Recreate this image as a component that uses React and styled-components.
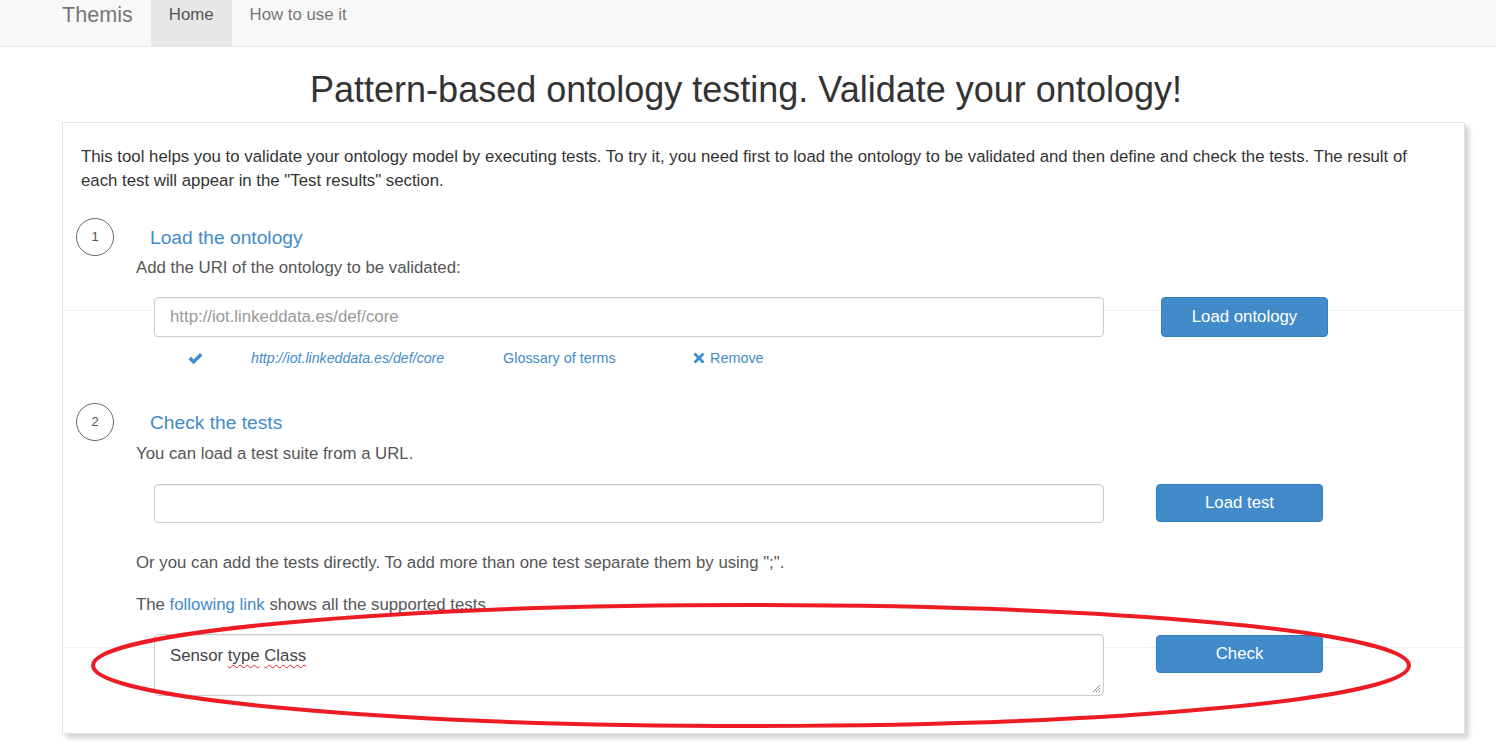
import styled, { createGlobalStyle } from "styled-components";

const GlobalStyle = createGlobalStyle`
  body {
    margin: 0;
    background: #ffffff;
    font-family: "Liberation Sans", Arial, Helvetica, sans-serif;
    font-size: 16.8px;
    line-height: 24px;
    color: #333333;
  }
  * {
    box-sizing: border-box;
  }
`;

const Page = styled.div`
  position: relative;
  width: 1496px;
  min-height: 749px;
  overflow: hidden;
`;

const Navbar = styled.nav`
  display: flex;
  height: 47px;
  padding-left: 62px;
  background: #f8f8f8;
  border-bottom: 1px solid #e7e7e7;
`;

const Brand = styled.a`
  padding: 2px 18px 0 0;
  font-size: 21.6px;
  line-height: 26px;
  color: #777777;
  text-decoration: none;
`;

const NavItem = styled.a`
  padding: 3px 18px 0;
  height: 46px;
  font-size: 16.8px;
  line-height: 24px;
  text-decoration: none;
  color: ${(p) => (p.active ? "#555555" : "#777777")};
  background: ${(p) => (p.active ? "#e7e7e7" : "transparent")};
`;

const Title = styled.h1`
  margin: 23px 0 12px;
  padding-right: 4px;
  font-size: 36px;
  line-height: 40px;
  font-weight: 400;
  text-align: center;
  color: #333333;
`;

const Card = styled.section`
  margin: 0 31px 16px 62px;
  padding: 22px 0 37px 0;
  border: 1px solid #e3e3e3;
  background: #ffffff;
  box-shadow: 4px 4px 5px rgba(0, 0, 0, 0.18);
`;

const Intro = styled.p`
  margin: 0;
  padding: 0 20px 0 18px;
  color: #333333;
`;

const Step = styled.div`
  display: flex;
  align-items: center;
  margin-top: ${(p) => p.top}px;
  padding-left: 13px;
`;

const Circle = styled.span`
  display: flex;
  align-items: center;
  justify-content: center;
  width: 38px;
  height: 38px;
  border: 1px solid #666666;
  border-radius: 50%;
  font-size: 13px;
  color: #555555;
`;

const StepTitle = styled.h4`
  margin: 1px 0 0 36px;
  font-size: 19.2px;
  line-height: 24px;
  font-weight: 400;
  color: #428bca;
`;

const Text = styled.p`
  margin: ${(p) => p.top || 0}px 0 0;
  padding-left: 73px;
  color: #555555;
`;

const Link = styled.a`
  color: #428bca;
  text-decoration: none;
`;

const FieldRow = styled.div`
  display: flex;
  align-items: flex-start;
  gap: ${(p) => p.gap}px;
  margin-top: ${(p) => p.top}px;
  padding-left: 91px;
  background: ${(p) =>
    p.rule ? "linear-gradient(#f0f0f0, #f0f0f0) no-repeat 2px 13px / calc(100% - 4px) 1px" : "none"};
`;

const Input = styled.input`
  width: 950px;
  height: ${(p) => p.h}px;
  padding: 0 15px;
  border: 1px solid #cccccc;
  border-radius: 4px;
  font-family: inherit;
  font-size: 16.8px;
  color: #555555;
  background: #ffffff;
  box-shadow: inset 0 1px 1px rgba(0, 0, 0, 0.075);
  &::placeholder {
    color: #999999;
  }
`;

const TextArea = styled.div`
  position: relative;
  width: 950px;
  height: 62px;
  padding: 9px 15px;
  border: 1px solid #cccccc;
  border-radius: 4px;
  font-size: 16.8px;
  line-height: 24px;
  color: #444444;
  background: #ffffff;
  box-shadow: inset 0 1px 1px rgba(0, 0, 0, 0.075);
`;

const Misspelled = styled.span`
  text-decoration: underline wavy #e02020;
  text-decoration-thickness: 1px;
  text-underline-offset: 3px;
`;

const Grip = styled.svg`
  position: absolute;
  right: 2px;
  bottom: 2px;
`;

const Button = styled.button`
  width: 167px;
  height: ${(p) => p.h}px;
  margin-top: ${(p) => p.top || 0}px;
  border: 1px solid #357ebd;
  border-radius: 4px;
  background: #428bca;
  color: #ffffff;
  font-family: inherit;
  font-size: 16.8px;
  cursor: pointer;
`;

const ResultRow = styled.div`
  display: grid;
  grid-template-columns: 63px 252px 190px auto;
  align-items: center;
  margin-top: 9px;
  padding-left: 125px;
  font-size: 14.4px;
  line-height: 24px;
`;

const UriLink = styled(Link)`
  font-style: italic;
  font-size: 14.2px;
`;

const IconLink = styled(Link)`
  display: flex;
  align-items: center;
  gap: 5px;
`;

const Overlay = styled.svg`
  position: absolute;
  left: 0;
  top: 0;
  pointer-events: none;
`;

const CheckIcon = () => (
  <svg width="15" height="13" viewBox="0 0 15 13">
    <path d="M0.5 7.2 L3 4.8 L5.6 7.4 L12 1 L14.5 3.4 L5.6 12.2 Z" fill="#428bca" />
  </svg>
);

const RemoveIcon = () => (
  <svg width="12" height="12" viewBox="0 0 12 12">
    <path
      d="M0.5 2.5 L2.5 0.5 L6 4 L9.5 0.5 L11.5 2.5 L8 6 L11.5 9.5 L9.5 11.5 L6 8 L2.5 11.5 L0.5 9.5 L4 6 Z"
      fill="#428bca"
    />
  </svg>
);

export default function App() {
  return (
    <Page>
      <GlobalStyle />
      <Navbar>
        <Brand href="#">Themis</Brand>
        <NavItem href="#" active>
          Home
        </NavItem>
        <NavItem href="#">How to use it</NavItem>
      </Navbar>

      <Title>Pattern-based ontology testing. Validate your ontology!</Title>

      <Card>
        <Intro>
          This tool helps you to validate your ontology model by executing tests. To try it, you
          need first to load the ontology to be validated and then define and check the tests. The
          result of each test will appear in the "Test results" section.
        </Intro>

        <Step top={25}>
          <Circle>1</Circle>
          <StepTitle>Load the ontology</StepTitle>
        </Step>
        <Text>Add the URI of the ontology to be validated:</Text>

        <FieldRow top={17} gap={57} rule>
          <Input h={40} placeholder="http://iot.linkeddata.es/def/core" />
          <Button h={40}>Load ontology</Button>
        </FieldRow>

        <ResultRow>
          <CheckIcon />
          <UriLink href="#">http://iot.linkeddata.es/def/core</UriLink>
          <Link href="#">Glossary of terms</Link>
          <IconLink href="#">
            <RemoveIcon />
            Remove
          </IconLink>
        </ResultRow>

        <Step top={33}>
          <Circle>2</Circle>
          <StepTitle>Check the tests</StepTitle>
        </Step>
        <Text top={1}>You can load a test suite from a URL.</Text>

        <FieldRow top={18} gap={52}>
          <Input h={39} />
          <Button h={38}>Load test</Button>
        </FieldRow>

        <Text top={28}>
          Or you can add the tests directly. To add more than one test separate them by using ";".
        </Text>
        <Text top={18}>
          The <Link href="#">following link</Link> shows all the supported tests.
        </Text>

        <FieldRow top={17} gap={52} rule>
          <TextArea>
            Sensor <Misspelled>type</Misspelled> <Misspelled>Class</Misspelled>
            <Grip width="10" height="10" viewBox="0 0 10 10">
              <path d="M9 2 L2 9 M9 5 L5 9 M9 8 L8 9" stroke="#888" strokeWidth="1" />
            </Grip>
          </TextArea>
          <Button h={38} top={1}>
            Check
          </Button>
        </FieldRow>
      </Card>

      <Overlay width="1496" height="749" viewBox="0 0 1496 749">
        <ellipse cx="751" cy="665.5" rx="658" ry="60.5" fill="none" stroke="#ed1c24" strokeWidth="4" />
      </Overlay>
    </Page>
  );
}
